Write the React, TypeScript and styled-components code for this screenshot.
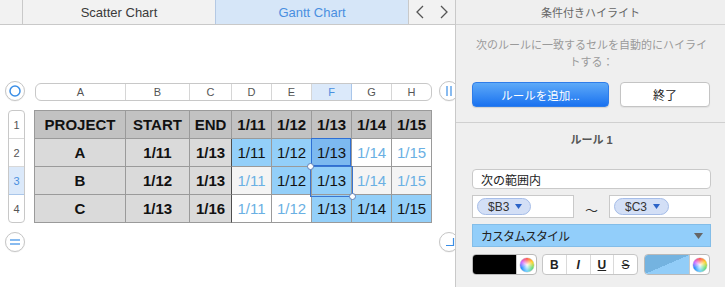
import React from 'react';
import styled, { createGlobalStyle, css } from 'styled-components';

const GlobalStyle = createGlobalStyle`
  html, body { margin: 0; padding: 0; background: #fff; }
  body { font-family: "Liberation Sans", "Noto Sans CJK JP", sans-serif; }
`;

const Page = styled.div`
  display: flex;
  width: 725px;
  height: 287px;
  overflow: hidden;
`;

const Main = styled.div`
  width: 455px;
  flex: none;
  overflow: hidden;
  display: flex;
  flex-direction: column;
`;

const TabBar = styled.div`
  display: flex;
  height: 24px;
  background: #f2f2f2;
  border-bottom: 1px solid #c9c9c9;
`;

const TabSpacer = styled.div`
  width: 22px;
`;

const Tab = styled.div<{ $active?: boolean }>`
  width: 193px;
  box-sizing: border-box;
  border-left: 1px solid ${(p) => (p.$active ? '#b4c9e4' : '#c9c9c9')};
  display: flex;
  align-items: center;
  justify-content: center;
  font-size: 13px;
  color: ${(p) => (p.$active ? '#4a8fe0' : '#3a3a3a')};
  background: ${(p) => (p.$active ? '#d6e6f8' : 'transparent')};
`;

const TabArrows = styled.div`
  flex: 1;
  border-left: 1px solid #c9c9c9;
  display: flex;
  align-items: center;
  gap: 16px;
  padding-left: 7px;
`;

const Canvas = styled.div`
  flex: 1;
  display: grid;
  grid-template-columns: 34px 398px 1fr;
  grid-template-rows: 20px 113px 20px;
  row-gap: 9px;
  padding-top: 56px;
`;

const Knob = styled.div<{ $offset: number }>`
  width: 20px;
  height: 20px;
  box-sizing: border-box;
  border-radius: 50%;
  border: 1px solid #c6c6c6;
  background: #fff;
  display: flex;
  align-items: center;
  justify-content: center;
  margin-left: ${(p) => p.$offset}px;
  box-shadow: 0 0.5px 1px rgba(0, 0, 0, 0.08);
`;

const ColumnBar = styled.div`
  align-self: end;
  height: 18px;
  margin-left: 1px;
  box-sizing: border-box;
  display: grid;
  grid-template-columns: 90px 64px 42px 40px 40px 40px 40px 39px;
  border: 1px solid #c8c8c8;
  border-radius: 6px;
  overflow: hidden;
  background: #fff;
`;

const ColHead = styled.div<{ $active?: boolean }>`
  box-sizing: border-box;
  display: flex;
  align-items: center;
  justify-content: center;
  font-size: 11px;
  color: ${(p) => (p.$active ? '#4a8fe0' : '#555')};
  background: ${(p) => (p.$active ? '#dbe9fa' : 'transparent')};
  border-right: 1px solid ${(p) => (p.$active ? '#a9c6ea' : '#d6d6d6')};
  &:last-child { border-right: none; }
`;

const RowRail = styled.div`
  margin-left: 8px;
  width: 17px;
  align-self: start;
  box-sizing: border-box;
  border: 1px solid #c8c8c8;
  border-radius: 4px;
  overflow: hidden;
  display: flex;
  flex-direction: column;
  background: #fff;
`;

const RowNum = styled.div<{ $active?: boolean }>`
  height: 28px;
  flex: none;
  box-sizing: border-box;
  border-bottom: 1px solid ${(p) => (p.$active ? '#a9c6ea' : '#d8d8d8')};
  display: flex;
  align-items: center;
  justify-content: center;
  font-size: 11px;
  color: ${(p) => (p.$active ? '#4a8fe0' : '#555')};
  background: ${(p) => (p.$active ? '#dbe9fa' : 'transparent')};
  &:last-child { border-bottom: none; height: 27px; }
`;

const Sheet = styled.div`
  display: grid;
  grid-template-columns: 91px 64px 42px repeat(5, 40px);
  grid-auto-rows: 28px;
  border-top: 1px solid #9a9a9a;
  border-left: 1px solid #9a9a9a;
`;

type CellKind = 'head' | 'label' | 'on' | 'sel' | 'off';

const kindStyles: Record<CellKind, ReturnType<typeof css>> = {
  head: css`
    background: #c2c2c2;
    color: #111;
    font-weight: bold;
  `,
  label: css`
    background: #dadada;
    color: #111;
    font-weight: bold;
  `,
  on: css`
    background: #93cff9;
    color: #111;
  `,
  sel: css`
    background: #7cb9f0;
    color: #111;
    &::after {
      content: '';
      position: absolute;
      top: -1px;
      left: -1px;
      right: 0;
      bottom: 0;
      border: 1px solid #2e6fd4;
      z-index: 1;
    }
  `,
  off: css`
    color: #6ab0e3;
  `,
};

const Cell = styled.div<{ $kind: CellKind; $alt?: boolean; $divider?: boolean }>`
  position: relative;
  box-sizing: border-box;
  display: flex;
  align-items: center;
  justify-content: center;
  border-right: 1px solid ${(p) => (p.$divider ? '#4d4d4d' : '#9a9a9a')};
  border-bottom: 1px solid #9a9a9a;
  font-size: 15px;
  background: ${(p) => (p.$alt ? '#f4f4f4' : '#fff')};
  ${(p) => kindStyles[p.$kind]}
`;

const RangeFrame = styled.span`
  position: absolute;
  top: -1px;
  left: -2px;
  right: -2px;
  bottom: -3px;
  border: 1px solid #3a76d0;
  z-index: 2;
`;

const Handle = styled.span<{ $corner: 'start' | 'end' }>`
  position: absolute;
  width: 7px;
  height: 7px;
  box-sizing: border-box;
  border-radius: 50%;
  background: #fff;
  border: 1px solid #5d7fb8;
  ${(p) =>
    p.$corner === 'start'
      ? css`top: -4px; left: -4px;`
      : css`bottom: -4px; right: -4px;`}
`;

const Panel = styled.aside`
  flex: 1;
  border-left: 1px solid #c9c9c9;
  background: #efefef;
  display: flex;
  flex-direction: column;
`;

const PanelHeader = styled.div`
  height: 24px;
  border-bottom: 1px solid #d2d2d2;
  display: flex;
  align-items: center;
  justify-content: center;
  font-size: 11px;
  color: #666;
`;

const Intro = styled.div`
  padding: 12px 14px 15px 16px;
  border-bottom: 1px solid #d0d0d0;
`;

const Description = styled.p`
  margin: 0 auto;
  width: 236px;
  font-size: 11px;
  line-height: 17px;
  color: #9a9a9a;
  text-align: center;
`;

const ButtonRow = styled.div`
  display: flex;
  gap: 11px;
  margin-top: 11px;
`;

const PrimaryButton = styled.button`
  width: 137px;
  height: 25px;
  border-radius: 4px;
  border: 1px solid #2f7de9;
  background: linear-gradient(#5eaaf8, #1a72f0);
  color: #fff;
  font-family: inherit;
  font-size: 11.5px;
  padding: 0;
  box-shadow: 0 1px 1px rgba(0, 0, 0, 0.12);
`;

const SecondaryButton = styled.button`
  width: 90px;
  height: 25px;
  border-radius: 4px;
  border: 1px solid #c4c4c4;
  background: #fff;
  color: #222;
  font-family: inherit;
  font-size: 12px;
  padding: 0;
  box-shadow: 0 1px 1px rgba(0, 0, 0, 0.06);
`;

const RuleSection = styled.div`
  padding: 10px 14px 0 16px;
`;

const RuleTitle = styled.div`
  text-align: center;
  font-size: 11px;
  font-weight: bold;
  line-height: 14px;
  color: #555;
`;

const TextField = styled.div`
  margin-top: 22px;
  height: 20px;
  box-sizing: border-box;
  border: 1px solid #c9c9c9;
  border-radius: 4px;
  background: #fff;
  padding-left: 8px;
  display: flex;
  align-items: center;
  font-size: 12px;
  color: #222;
`;

const RangeRow = styled.div`
  margin-top: 6px;
  height: 23px;
  display: flex;
`;

const RangeBox = styled.div`
  width: 102px;
  box-sizing: border-box;
  border: 1px solid #c9c9c9;
  background: #fff;
  padding-left: 4px;
  display: flex;
  align-items: center;
`;

const Tilde = styled.div`
  flex: 1;
  display: flex;
  align-items: center;
  justify-content: center;
  padding-top: 6px;
  font-size: 13px;
  color: #333;
`;

const Token = styled.span`
  height: 17px;
  box-sizing: border-box;
  padding: 0 8px 0 10px;
  border-radius: 9px;
  background: #d3dff6;
  border: 1px solid #a6bde8;
  display: inline-flex;
  align-items: center;
  gap: 6px;
  font-size: 12px;
  color: #333;
`;

const StyleSelect = styled.div`
  margin-top: 6px;
  height: 23px;
  box-sizing: border-box;
  background: #92cefa;
  border: 1px solid #83bde8;
  padding: 0 7px 0 8px;
  display: flex;
  align-items: center;
  justify-content: space-between;
  font-size: 12px;
  letter-spacing: -1px;
  color: #222;
`;

const FormatRow = styled.div`
  margin-top: 7px;
  height: 21px;
  display: flex;
  gap: 5px;
`;

const ColorWell = styled.div<{ $width: number }>`
  width: ${(p) => p.$width}px;
  box-sizing: border-box;
  border: 1px solid #b9b9b9;
  border-radius: 4px;
  overflow: hidden;
  display: flex;
  background: #fff;
`;

const Swatch = styled.div<{ $fill: string }>`
  flex: 1;
  background: ${(p) => p.$fill};
`;

const WheelSlot = styled.div`
  width: 19px;
  border-left: 1px solid #c9c9c9;
  display: flex;
  align-items: center;
  justify-content: center;
`;

const Wheel = styled.span`
  width: 14px;
  height: 14px;
  border-radius: 50%;
  background: radial-gradient(circle, rgba(255, 255, 255, 0.95) 0, rgba(255, 255, 255, 0) 75%),
    conic-gradient(#ff3b30, #ffcc00, #4cd964, #5ac8fa, #007aff, #cc4bff, #ff3b30);
  box-shadow: 0 0 0 0.5px rgba(0, 0, 0, 0.2);
`;

const StyleGroup = styled.div`
  width: 96px;
  box-sizing: border-box;
  border: 1px solid #c6c6c6;
  border-radius: 4px;
  background: #fff;
  display: flex;
  margin-right: 1px;
`;

const StyleButton = styled.div<{ $mark: 'b' | 'i' | 'u' | 's' }>`
  flex: 1;
  display: flex;
  align-items: center;
  justify-content: center;
  border-right: 1px solid #dadada;
  font-family: "Liberation Sans", sans-serif;
  font-size: 12px;
  font-weight: bold;
  color: #222;
  &:last-child { border-right: none; }
  ${(p) => p.$mark === 'i' && css`font-style: italic;`}
  ${(p) => p.$mark === 'u' && css`text-decoration: underline;`}
  ${(p) => p.$mark === 's' && css`text-decoration: line-through; font-weight: normal;`}
`;

const Chevron = ({ dir }: { dir: 'left' | 'right' }) => (
  <svg width="8" height="14" viewBox="0 0 8 14">
    <polyline
      points={dir === 'left' ? '7,1 1,7 7,13' : '1,1 7,7 1,13'}
      fill="none"
      stroke="#555"
      strokeWidth="1.3"
    />
  </svg>
);

const Caret = ({ color, w = 7, h = 5 }: { color: string; w?: number; h?: number }) => (
  <svg width={w} height={h} viewBox={`0 0 ${w} ${h}`}>
    <polygon points={`0,0 ${w},0 ${w / 2},${h}`} fill={color} />
  </svg>
);

const columns = ['A', 'B', 'C', 'D', 'E', 'F', 'G', 'H'];
const headers = ['PROJECT', 'START', 'END', '1/11', '1/12', '1/13', '1/14', '1/15'];
const dates = ['1/11', '1/12', '1/13', '1/14', '1/15'];

const rows: { name: string; start: string; end: string; marks: CellKind[] }[] = [
  { name: 'A', start: '1/11', end: '1/13', marks: ['on', 'on', 'sel', 'off', 'off'] },
  { name: 'B', start: '1/12', end: '1/13', marks: ['off', 'on', 'on', 'off', 'off'] },
  { name: 'C', start: '1/13', end: '1/16', marks: ['off', 'off', 'on', 'on', 'on'] },
];

export default function App() {
  return (
    <Page>
      <GlobalStyle />
      <Main>
        <TabBar>
          <TabSpacer />
          <Tab>Scatter Chart</Tab>
          <Tab $active>Gantt Chart</Tab>
          <TabArrows>
            <Chevron dir="left" />
            <Chevron dir="right" />
          </TabArrows>
        </TabBar>
        <Canvas>
          <Knob $offset={5}>
            <svg width="12" height="12" viewBox="0 0 12 12">
              <circle cx="6" cy="6" r="5" fill="none" stroke="#3a8ee6" strokeWidth="1.5" />
            </svg>
          </Knob>
          <ColumnBar>
            {columns.map((c) => (
              <ColHead key={c} $active={c === 'F'}>{c}</ColHead>
            ))}
          </ColumnBar>
          <Knob $offset={7}>
            <svg width="8" height="12" viewBox="0 0 8 12">
              <line x1="2" y1="1" x2="2" y2="11" stroke="#3a8ee6" strokeWidth="1.2" />
              <line x1="6" y1="1" x2="6" y2="11" stroke="#3a8ee6" strokeWidth="1.2" />
            </svg>
          </Knob>

          <RowRail>
            {[1, 2, 3, 4].map((n) => (
              <RowNum key={n} $active={n === 3}>{n}</RowNum>
            ))}
          </RowRail>
          <Sheet>
            {headers.map((h) => (
              <Cell key={h} $kind="head">{h}</Cell>
            ))}
            {rows.map((r, ri) => {
              const alt = ri === 1;
              return (
                <React.Fragment key={r.name}>
                  <Cell $kind="label">{r.name}</Cell>
                  <Cell $kind="label">{r.start}</Cell>
                  <Cell $kind="label" $divider>{r.end}</Cell>
                  {r.marks.map((m, di) => (
                    <Cell key={di} $kind={m} $alt={alt}>
                      {dates[di]}
                      {ri === 1 && di === 2 && (
                        <RangeFrame>
                          <Handle $corner="start" />
                          <Handle $corner="end" />
                        </RangeFrame>
                      )}
                    </Cell>
                  ))}
                </React.Fragment>
              );
            })}
          </Sheet>
          <div />

          <Knob $offset={5}>
            <svg width="12" height="8" viewBox="0 0 12 8">
              <line x1="1" y1="2" x2="11" y2="2" stroke="#3a8ee6" strokeWidth="1.2" />
              <line x1="1" y1="6" x2="11" y2="6" stroke="#3a8ee6" strokeWidth="1.2" />
            </svg>
          </Knob>
          <div />
          <Knob $offset={7}>
            <svg width="18" height="18" viewBox="0 0 18 18">
              <path d="M6 12.5 H13.5 V5" fill="none" stroke="#3a8ee6" strokeWidth="1.2" />
            </svg>
          </Knob>
        </Canvas>
      </Main>

      <Panel>
        <PanelHeader>条件付きハイライト</PanelHeader>
        <Intro>
          <Description>次のルールに一致するセルを自動的にハイライトする：</Description>
          <ButtonRow>
            <PrimaryButton>ルールを追加...</PrimaryButton>
            <SecondaryButton>終了</SecondaryButton>
          </ButtonRow>
        </Intro>
        <RuleSection>
          <RuleTitle>ルール 1</RuleTitle>
          <TextField>次の範囲内</TextField>
          <RangeRow>
            <RangeBox>
              <Token>
                $B3
                <Caret color="#2c64c8" />
              </Token>
            </RangeBox>
            <Tilde>〜</Tilde>
            <RangeBox>
              <Token>
                $C3
                <Caret color="#2c64c8" />
              </Token>
            </RangeBox>
          </RangeRow>
          <StyleSelect>
            <span>カスタムスタイル</span>
            <Caret color="#666" w={9} h={6} />
          </StyleSelect>
          <FormatRow>
            <ColorWell $width={65}>
              <Swatch $fill="#000" />
              <WheelSlot>
                <Wheel />
              </WheelSlot>
            </ColorWell>
            <StyleGroup>
              <StyleButton $mark="b">B</StyleButton>
              <StyleButton $mark="i">I</StyleButton>
              <StyleButton $mark="u">U</StyleButton>
              <StyleButton $mark="s">S</StyleButton>
            </StyleGroup>
            <ColorWell $width={66}>
              <Swatch $fill="linear-gradient(to bottom right, #74b3e0 50%, #92cdf8 50%)" />
              <WheelSlot>
                <Wheel />
              </WheelSlot>
            </ColorWell>
          </FormatRow>
        </RuleSection>
      </Panel>
    </Page>
  );
}
